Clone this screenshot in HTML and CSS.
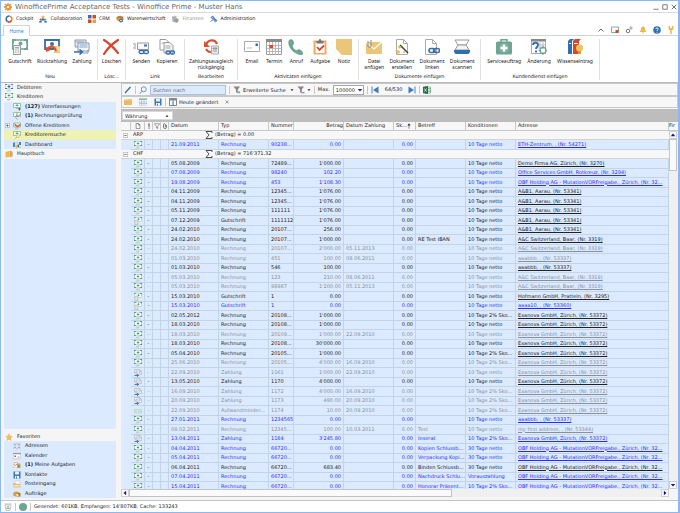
FILE: index.html
```html
<!DOCTYPE html>
<html lang="de">
<head>
    <meta charset="UTF-8">
    <meta name="viewport" content="width=device-width, initial-scale=1.0">
    <title>WinofficePrime Acceptance Tests</title>
    <link rel="stylesheet" href="styles.css">
</head>
<body>
    <!-- Icon sprite -->
    <svg class="sprite" xmlns="http://www.w3.org/2000/svg">
        <symbol id="i-gear" viewBox="0 0 16 16"><circle cx="8" cy="8" r="4.2" fill="none" stroke="#e8861c" stroke-width="3"/><path d="M8 0v3M8 13v3M0 8h3M13 8h3M2.3 2.3l2 2M11.7 11.7l2 2M2.3 13.7l2-2M11.7 4.3l2-2" stroke="#e8861c" stroke-width="2.6"/></symbol>
        <symbol id="i-cockpit" viewBox="0 0 16 16"><g fill="none" stroke-width="3"><path d="M8 2a6 6 0 0 1 5 9" stroke="#e8861c"/><path d="M13 11a6 6 0 0 1-8 2" stroke="#d9472b"/><path d="M5 13A6 6 0 0 1 8 2" stroke="#2f6fb0"/></g></symbol>
        <symbol id="i-collab" viewBox="0 0 16 16"><circle cx="8" cy="4" r="3" fill="#e9b95c"/><path d="M4 11c0-6 8-6 8 0z" fill="#2f6fb0"/><circle cx="3" cy="9" r="2" fill="#d9472b"/><path d="M0 15c0-5 6-5 6 0zM10 15c0-5 6-5 6 0z" fill="#2f6fb0"/><circle cx="13" cy="9" r="2" fill="#6fa592"/></symbol>
        <symbol id="i-crm" viewBox="0 0 16 16"><path d="M0 0h7v7H0z" fill="#3a6fa8"/><path d="M9 0h7v7H9z" fill="#d9472b"/><path d="M0 9h7v7H0z" fill="#d9472b"/><path d="M9 9h7v7H9z" fill="#e9a23b"/></symbol>
        <symbol id="i-ware" viewBox="0 0 16 16"><ellipse cx="8" cy="7" rx="7.5" ry="5.5" fill="#dba045"/><path d="M2 6c4-3 8-3 12 0" fill="none" stroke="#7a5a2a" stroke-width="1.5"/><circle cx="10" cy="11" r="4" fill="#3a6fa8"/><circle cx="10" cy="11" r="1.6" fill="#fff"/></symbol>
        <symbol id="i-fin" viewBox="0 0 16 16"><path d="M2 4l5-3 4 2v9l-5 3-4-3z" fill="#c4c4c4"/><path d="M7 8l4-2 4 2v5l-4 3-4-3z" fill="#9f9f9f"/><path d="M2 4l4 2v8M6 6l5-3" stroke="#888" fill="none"/></symbol>
        <symbol id="i-admin" viewBox="0 0 16 16"><path d="M1 5l4-4 10 10-4 4z" fill="#4b86c4"/><path d="M4 4l3 3M6 9l5 5M9 5l4 4" stroke="#fff"/><path d="M2 13l3-3" stroke="#555" stroke-width="2"/></symbol>

        <symbol id="i-gutschrift" viewBox="0 0 16 16"><path d="M.8 1h14.4v9H.8z" fill="#fff" stroke="#6fa592" stroke-width="1.6"/><path d="M0 0h4v2H2v2H0zM12 0h4v4h-2V2h-2zM14 8h2v3h-4V9h2z" fill="#6fa592"/><circle cx="8.5" cy="4.5" r="2" fill="#6fa592"/><path d="M1.5 6.500h7v9h-7z" fill="#f2f2f2" stroke="#999"/><path d="M3 8h4v1.500H3z" fill="#9aa"/><path d="M3 11h4M3 13h4" stroke="#aaa" stroke-dasharray="1 .5"/></symbol>
        <symbol id="i-rueck" viewBox="0 0 16 16"><path d="M1 1h14v9H1z" fill="#fff" stroke="#3a6fa8" stroke-width="1.800"/><circle cx="8" cy="5" r="2" fill="#3a6fa8"/><path d="M10 7h6v7h-6z" fill="#ecc678"/><path d="M10 9h6M10 11h6" stroke="#fff" stroke-width=".6"/><path d="M3 11c2-5 8-4 9 1" fill="none" stroke="#d9512f" stroke-width="2"/><path d="M1 7l1 6 5-2z" fill="#d9512f"/></symbol>
        <symbol id="i-zahlung" viewBox="0 0 16 16"><path d="M1 1h11v7H1z" fill="#e9edf1" stroke="#8a98a8"/><path d="M4 4h11v8H4z" fill="#f4f6f8" stroke="#8a98a8"/><path d="M5.500 6h8M5.500 8h8M2 3h8" stroke="#7fa2cc"/><path d="M0 13h8M5.500 10.500L8.500 13l-3 2.500" fill="none" stroke="#2f6fb0" stroke-width="1.600"/><path d="M9 14h5v-3" fill="none" stroke="#8a98a8"/></symbol>
        <symbol id="i-loeschen" viewBox="0 0 16 16"><path d="M1 1c5 3 10 8 14 13M15 1C9 5 4 10 1 15" fill="none" stroke="#d8452a" stroke-width="2.200" stroke-linecap="round"/></symbol>
        <symbol id="i-senden" viewBox="0 0 16 16"><path d="M4.500 4h11v6.500h-11z" fill="#fafafa" stroke="#999"/><path d="M11 5.500h3v2h-3z" fill="#3a6fa8"/><path d="M0 5h3M1 7h2M0 9h3" stroke="#999"/><g fill="none" stroke="#3a6fa8" stroke-width="1.300"><rect x="6" y="11.500" width="5" height="3" rx="1.500"/><rect x="10.500" y="11.500" width="5" height="3" rx="1.500"/></g></symbol>
        <symbol id="i-kopieren" viewBox="0 0 16 16"><path d="M1 .5h6l3 3V11H1z" fill="#fff" stroke="#999"/><path d="M5 3.500h6l3 3V14H5z" fill="#f4f4f4" stroke="#999"/><path d="M2.500 4h3M6.500 7h5M6.500 9h5" stroke="#aaa"/><g fill="none" stroke="#3a6fa8" stroke-width="1.300"><rect x="7" y="12" width="4.500" height="3" rx="1.500"/><rect x="11" y="12" width="4.500" height="3" rx="1.500"/></g></symbol>
        <symbol id="i-undo" viewBox="0 0 16 16"><path d="M3 6c2-6 9-6 11-1" fill="none" stroke="#d9512f" stroke-width="2.200"/><path d="M1 2v6h6z" fill="#d9512f"/><path d="M12 9c-2 5-7 5-9 1" fill="none" stroke="#d9512f" stroke-width="2"/><path d="M8.500 7h7v8h-7z" fill="#ececec" stroke="#aaa"/><path d="M10 9h4v1h-4zM10 12h4" stroke="#999" fill="#999"/></symbol>
        <symbol id="i-email" viewBox="0 0 16 16"><path d="M.5 2.500h15v10H.5z" fill="#fff" stroke="#aaa"/><path d="M11.500 4.500h2.500V7h-2.500z" fill="#2f6fb0"/><path d="M3 9h5" stroke="#bbb"/></symbol>
        <symbol id="i-termin" viewBox="0 0 16 16"><path d="M.5.5h15v15H.5z" fill="#fff" stroke="#999"/><path d="M0 0h16v3H0z" fill="#8a8a8a"/><path d="M3.500 3v13M6.500 3v13M9.500 3v13M12.500 3v13M0 6.500h16M0 9.500h16M0 12.500h16" stroke="#aaa" stroke-width=".8"/><path d="M3.500 6h3.500v3H3.500z" fill="#d9472b"/></symbol>
        <symbol id="i-anruf" viewBox="0 0 16 16"><path d="M1 1c3-2 5 1 5 3S4 6 5 8s3 4 4 3 3-1 5 1 1 4-1 4C6 16-2 7 1 1z" fill="#6fa592"/></symbol>
        <symbol id="i-aufgabe" viewBox="0 0 16 16"><path d="M1.500 1.500h13v14h-13z" fill="#f0a860"/><path d="M3.500 3.500h9v10.500h-9z" fill="#fff"/><path d="M4.500 2h2l1-2h1l1 2h2v2.500h-7z" fill="#777"/><path d="M5 8l2.500 3L12 6.500" fill="none" stroke="#d9472b" stroke-width="1.800"/></symbol>
        <symbol id="i-notiz" viewBox="0 0 16 16"><path d="M0 0h16v16H6L0 10z" fill="#ecc678"/></symbol>
        <symbol id="i-datei" viewBox="0 0 16 16"><path d="M0 3h16v12H0z" fill="#ecc678"/><path d="M0 3l8 7 8-7" fill="none" stroke="#fff" stroke-width="1.200"/><path d="M2 2v5c0 2 3 2 3 0V1" fill="none" stroke="#888"/></symbol>
        <symbol id="i-erstellen" viewBox="0 0 16 16"><path d="M2.500.5h7l4 4v11h-11z" fill="#fff" stroke="#aaa"/><path d="M9.500.5v4h4" fill="none" stroke="#aaa"/><path d="M6 6l8 8" stroke="#444" stroke-width="1.600"/><path d="M4 8h3M5.500 6.500v3M2 13h4M4 11v4M9 13h2" stroke="#ecb84e" stroke-width="1.400"/></symbol>
        <symbol id="i-linken" viewBox="0 0 16 16"><path d="M1.500.5h7l4 4v11h-11z" fill="#fff" stroke="#aaa"/><path d="M8.500.5v4h4" fill="none" stroke="#aaa"/><g fill="none" stroke="#3a6fa8" stroke-width="1.600"><rect x="5" y="9.500" width="6" height="4" rx="2"/><rect x="9.500" y="9.500" width="6" height="4" rx="2"/></g></symbol>
        <symbol id="i-scannen" viewBox="0 0 16 16"><path d="M1 1h14l-3 5H4z" fill="#fff" stroke="#999"/><path d="M4 6h8l3 5H1z" fill="#f4f4f4" stroke="#999"/><path d="M0 11h16v2l-1.500 2h-13L0 13z" fill="#2f6fb0"/></symbol>
        <symbol id="i-service" viewBox="0 0 16 16"><path d="M5 3V.8h6V3" fill="none" stroke="#6fa592" stroke-width="1.500"/><rect y="2.500" width="16" height="13" rx="1.500" fill="#6fa592"/><circle cx="8" cy="9" r="4.500" fill="#86b5a4"/><path d="M8 5.500v7M4.500 9h7" stroke="#fff" stroke-width="2.400"/></symbol>
        <symbol id="i-aenderung" viewBox="0 0 16 16"><path d="M.5 1.500h14v13H.5z" fill="#fff" stroke="#aaa"/><path d="M0 0h15v2.500H0z" fill="#888"/><path d="M9 3v6M12 3v6M7 6h8M7 9h8" stroke="#bbb"/><path d="M2 6c0-3 5-3 5 0 0 2-2 2-2 4M5 11.500v2" fill="none" stroke="#2f6fb0" stroke-width="1.900"/><circle cx="12" cy="11.500" r="3" fill="#fff" stroke="#6fa592" stroke-width="1.300"/><path d="M12 7v2.500M12 13.500V16M7.500 11.500H10M14 11.500h2" stroke="#6fa592"/></symbol>
        <symbol id="i-wissen" viewBox="0 0 16 16"><path d="M1 2l2-2h4L5 2v13H1z" fill="#2f6fb0"/><path d="M6 2l2-2h6l-2 2v13H6z" fill="#d9472b"/><path d="M2 4.500h2M7 4.500h4" stroke="#fff"/><circle cx="12.500" cy="9" r="3.500" fill="#f0c25e"/><path d="M11 12h3v3h-3z" fill="#d89a2e"/></symbol>

        <symbol id="i-up" viewBox="0 0 16 16"><path d="M3 11l5-5 5 5" fill="none" stroke="#666" stroke-width="2"/></symbol>
        <symbol id="i-window" viewBox="0 0 16 16"><path d="M1 2h14v11H1z" fill="#fff" stroke="#6fa592" stroke-width="1.800"/><path d="M9 8h6v6H9z" fill="#d9472b"/></symbol>
        <symbol id="i-gears" viewBox="0 0 16 16"><circle cx="6" cy="10" r="3.500" fill="none" stroke="#777" stroke-width="2"/><circle cx="12" cy="4" r="2.300" fill="none" stroke="#6fa592" stroke-width="1.800"/></symbol>
        <symbol id="i-bell" viewBox="0 0 16 16"><path d="M8 1c4 0 4 4 4 7l3 4H1l3-4c0-3 0-7 4-7z" fill="#ecb84e"/><circle cx="8" cy="14" r="1.600" fill="#ecb84e"/></symbol>
        <symbol id="i-help" viewBox="0 0 16 16"><circle cx="8" cy="8" r="7.500" fill="#2f6fb0"/><path d="M5.500 6c0-3 5-3 5 0 0 2-2.500 1.500-2.500 4M8 11.500v1.800" fill="none" stroke="#fff" stroke-width="1.800"/></symbol>
        <symbol id="i-key" viewBox="0 0 16 16"><path d="M3 0v5c0 2 2 3 3.500 3v8h3V8C11 8 13 7 13 5V0h-3v4H6V0z" fill="#ecb84e"/></symbol>

        <symbol id="i-min" viewBox="0 0 16 16"><path d="M1 14h14" stroke="#777" stroke-width="2.500"/></symbol>
        <symbol id="i-max" viewBox="0 0 16 16"><path d="M2 2h12v12H2z" fill="none" stroke="#777" stroke-width="2.500"/></symbol>
        <symbol id="i-close" viewBox="0 0 16 16"><path d="M2 2l12 12M14 2L2 14" stroke="#666" stroke-width="2.500"/></symbol>

        <symbol id="i-rechnung" viewBox="0 0 16 16"><path d="M1 1h14v8H1z" fill="#fff" stroke="#9cc7b2"/><path d="M0 0h4v1.500H1.500V3H0zM12 0h4v3h-1.500V1.500H12zM0 7h1.500v1.500H4V10H0zM14.500 7H16v3h-4V8.500h2.500z" fill="#3f9a70"/><path d="M8 2.500v5M5.500 5h5" stroke="#3f9a70" stroke-width="1.800"/><path d="M5 11h7l-2 4H3z" fill="#c9ccd1"/></symbol>
        <symbol id="i-gut" viewBox="0 0 16 16"><path d="M1 1h14v8H1z" fill="#fff" stroke="#9cc7b2"/><path d="M0 0h4v1.500H0zM12 0h4v3h-1.500V1.500H12z" fill="#3f9a70"/><circle cx="9" cy="4.500" r="1.800" fill="#3f9a70"/><path d="M1.500 6h6v9h-6z" fill="#e2e2e2" stroke="#aaa"/></symbol>
        <symbol id="i-zahl" viewBox="0 0 16 16"><path d="M1 1h11v7H1zM4 4h11v7H4z" fill="#eef0f3" stroke="#9aa5b5"/><path d="M1 13h8M6 10.500L9 13l-3 2.500" fill="none" stroke="#2f6fb0" stroke-width="1.800"/></symbol>
        <symbol id="i-aufwand" viewBox="0 0 16 16"><path d="M1 5h14v7H1z" fill="#dcefe2" stroke="#9cc7a8"/><path d="M4 7v3M8 8.500h2M12 7v3" stroke="#6aa880"/></symbol>

        <symbol id="i-debitor" viewBox="0 0 16 16"><path d="M1 1h14v8H1z" fill="#fff" stroke="#9ab4d6"/><path d="M0 0h4v1.500H0zM12 0h4v1.500h-4zM0 8h4v2H0zM12 8h4v2h-4z" fill="#3a6fa8"/><path d="M8 2v6M5 5h6" stroke="#3a6fa8" stroke-width="2.200"/><path d="M5 11h7l-2 4H3z" fill="#c9ccd1"/></symbol>
        <symbol id="i-vorerf" viewBox="0 0 16 16"><path d="M1 1h14v8H1z" fill="#fff" stroke="#6fb592" stroke-width="1.500"/><path d="M8 2v5M5 5h6" stroke="#3f9a70" stroke-width="1.600"/><path d="M6 9h6v3H6z" fill="#bbb"/><path d="M13 9v6M10 12h6" stroke="#555" stroke-width="1.600"/></symbol>
        <symbol id="i-pruef" viewBox="0 0 16 16"><path d="M1 1h14v8H1z" fill="#fff" stroke="#6fb592" stroke-width="1.500"/><path d="M8 2v5" stroke="#3f9a70" stroke-width="1.600"/><path d="M3 9l7 6" stroke="#aaa" stroke-width="2"/><path d="M6 6l4 3 5-5" fill="none" stroke="#d9512f" stroke-width="1.800"/></symbol>
        <symbol id="i-offen" viewBox="0 0 16 16"><path d="M1 2h14v8H1z" fill="#fff" stroke="#6fb592" stroke-width="1.500"/><path d="M3 2l6 5 6-4v4l-6 5-6-5z" fill="#d96a4a"/><path d="M5 11h7l-2 4H3z" fill="#c9ccd1"/></symbol>
        <symbol id="i-suche" viewBox="0 0 16 16"><path d="M1 1h14v8H1z" fill="#fff" stroke="#6fb592" stroke-width="1.500"/><path d="M8 2v5M5 5h6" stroke="#3f9a70" stroke-width="1.600"/><circle cx="10" cy="10" r="3" fill="#f6efd0" stroke="#e0b040" stroke-width="1.300"/><path d="M8 12l-4 4" stroke="#e0b040" stroke-width="1.600"/></symbol>
        <symbol id="i-dash" viewBox="0 0 16 16"><path d="M0 3h4v9H0zM12 2h4v6h-4z" fill="#4b86c4"/><path d="M5 1h6v5H5z" fill="#c8d8ea"/><path d="M5 8h3v7H5z" fill="#ecb84e"/><path d="M9 7h3v6H9z" fill="#3a6fa8"/><path d="M12 10h4v4h-4z" fill="#f0d090"/></symbol>
        <symbol id="i-haupt" viewBox="0 0 16 16"><path d="M1 4l7-2v12l-7 1z" fill="#ecb84e"/><path d="M9 2l4-1v12l-4 2z" fill="#dba045"/><path d="M13 3l2 1v9l-2 1z" fill="#999"/></symbol>
        <symbol id="i-star" viewBox="0 0 16 16"><path d="M8 0l2.400 5.300 5.600.6-4.200 3.800L13 16l-5-3-5 3 1.200-6.300L0 5.900l5.600-.6z" fill="#ecbe62"/></symbol>
        <symbol id="i-adr" viewBox="0 0 16 16"><path d="M.5 2.500h15v11H.5z" fill="#fff" stroke="#9ab4d6"/><path d="M8 2v12" stroke="#888"/><path d="M2 5h4M10 5h4M2 8h4M10 8h4M2 11h4M10 11h4" stroke="#6f93b8" stroke-width="1.400"/></symbol>
        <symbol id="i-kal" viewBox="0 0 16 16"><path d="M.5 2.500h15v11H.5z" fill="#fff" stroke="#aaa"/><path d="M0 2h16v2.500H0z" fill="#999"/><path d="M3 7h3v3H3z" fill="#d9472b"/><path d="M9 10h4" stroke="#888" stroke-width="1.500"/></symbol>
        <symbol id="i-aufg" viewBox="0 0 16 16"><path d="M1 2h8v12H1z" fill="#f0c080"/><path d="M3 4h6v9H3z" fill="#fff"/><path d="M8 5h7v9H8z" fill="#e9a050"/><path d="M10 8h3v5h-3z" fill="#4b9a80"/><path d="M3 7l2 2 4-4" fill="none" stroke="#d9472b" stroke-width="1.400"/></symbol>
        <symbol id="i-disk" viewBox="0 0 16 16"><path d="M1 1h14v14H1z" fill="#3a78b8"/><path d="M4 1h8v6H4z" fill="#e8f0fa"/><path d="M4 10h8v5H4z" fill="#fff"/><path d="M6 11h2v4H6z" fill="#3a78b8"/></symbol>
        <symbol id="i-post" viewBox="0 0 16 16"><path d="M4 2h10v6H4z" fill="#fff" stroke="#bbb"/><path d="M0 6h6l1 2h8v7H1z" fill="#ecc060"/><path d="M2 10h11v3H2z" fill="#f8e6bc"/></symbol>
        <symbol id="i-auft" viewBox="0 0 16 16"><ellipse cx="7" cy="8" rx="7" ry="5" fill="#dba045"/><path d="M8 6h7v7H9z" fill="#b5762a"/><circle cx="9" cy="10" r="2.200" fill="#fff"/></symbol>

        <symbol id="i-pen" viewBox="0 0 16 16"><path d="M2 14L13 2" stroke="#2f6fb0" stroke-width="2.600"/></symbol>
        <symbol id="i-lupe" viewBox="0 0 16 16"><circle cx="9.500" cy="6.500" r="5" fill="#eef5fd" stroke="#4b86c4" stroke-width="1.700"/><path d="M6 10.500l-4.500 5" stroke="#4b86c4" stroke-width="2"/></symbol>
        <symbol id="i-funnel" viewBox="0 0 16 16"><path d="M1 1h13L9.500 7v8L6 12V7z" fill="#858585"/><path d="M12 10v5M9.500 12.500h5" stroke="#4b9a70" stroke-width="1.500"/></symbol>
        <symbol id="i-funnel2" viewBox="0 0 16 16"><path d="M1 1h13L9.500 7v8L6 12V7z" fill="#858585"/><path d="M10 13.500h5" stroke="#a050b0" stroke-width="2"/></symbol>
        <symbol id="i-first" viewBox="0 0 16 16"><path d="M2 1v14" stroke="#4b86c4" stroke-width="2"/><path d="M15 1v14L4 8z" fill="#3f7cbc"/></symbol>
        <symbol id="i-last" viewBox="0 0 16 16"><path d="M14 1v14" stroke="#4b86c4" stroke-width="2"/><path d="M1 1v14l11-7z" fill="#3f7cbc"/></symbol>
        <symbol id="i-excel" viewBox="0 0 16 16"><path d="M8 2h7v12H8z" fill="#fff" stroke="#2f7f4f"/><path d="M0 1.500L10 0v16L0 14.500z" fill="#1f7244"/><path d="M3 5l4 6M7 5l-4 6" stroke="#fff" stroke-width="1.500"/><path d="M10 5h5M10 8h5M10 11h5" stroke="#2f7f4f"/></symbol>
        <symbol id="i-folder" viewBox="0 0 16 16"><path d="M0 3h6l2-1h8v12H0z" fill="#ecc678"/><path d="M0 6h16v8H0z" fill="#e9bb60"/></symbol>
        <symbol id="i-table" viewBox="0 0 16 16"><path d="M.5 1.500h15v13H.5z" fill="#fff" stroke="#9ab4d6"/><path d="M0 1h16v3H0z" fill="#8fb8a8"/><path d="M5 4v10M10 4v10M0 8h16M0 11h16" stroke="#7f9fc8"/></symbol>
        <symbol id="i-column" viewBox="0 0 16 16"><path d="M1 1h14v14H1z" fill="#fff" stroke="#666" stroke-width="1.600"/><path d="M1 1h14v4H1z" fill="#888"/><path d="M8 5v10" stroke="#4b86c4" stroke-width="2.500"/></symbol>
        <symbol id="i-page" viewBox="0 0 16 16"><path d="M3 1h6l4 4v10H3z" fill="#fff" stroke="#444" stroke-width="1.500"/><path d="M9 1v4h4" fill="none" stroke="#444" stroke-width="1.500"/></symbol>
        <symbol id="i-excl" viewBox="0 0 16 16"><path d="M8 1v9M8 12v3" stroke="#333" stroke-width="2.500"/></symbol>
        <symbol id="i-filter" viewBox="0 0 16 16"><path d="M1 2h14L9.500 9v6l-3-2V9z" fill="#fff" stroke="#555" stroke-width="1.500"/></symbol>
        <symbol id="i-clip" viewBox="0 0 16 16"><path d="M12 5v6c0 5-8 5-8 0V4c0-3 5-3 5 0v7" fill="none" stroke="#555" stroke-width="2"/></symbol>
        <symbol id="i-minus" viewBox="0 0 16 16"><path d="M1 1h14v14H1z" fill="#fff" stroke="#999" stroke-width="2"/><path d="M4 8h8" stroke="#444" stroke-width="2"/></symbol>
        <symbol id="i-plus" viewBox="0 0 16 16"><path d="M1 1h14v14H1z" fill="#fff" stroke="#999" stroke-width="2"/><path d="M4 8h8M8 4v8" stroke="#444" stroke-width="2"/></symbol>
        <symbol id="i-sum" viewBox="0 0 16 16"><path d="M14 4V1H2l6 7-6 7h12v-3" fill="none" stroke="#333" stroke-width="1.700"/></symbol>
        <symbol id="i-sort" viewBox="0 0 16 16"><path d="M8 3v4M5 6l3-4 3 4zM8 10v5M6 11l2-2" fill="#333" stroke="#333" stroke-width="1.600"/></symbol>
        <symbol id="i-tri-up" viewBox="0 0 16 16"><path d="M8 4l6 7H2z" fill="currentColor"/></symbol>
        <symbol id="i-tri-down" viewBox="0 0 16 16"><path d="M8 12l6-7H2z" fill="currentColor"/></symbol>
        <symbol id="i-tri-left" viewBox="0 0 16 16"><path d="M4 8l7-6v12z" fill="currentColor"/></symbol>
        <symbol id="i-tri-right" viewBox="0 0 16 16"><path d="M12 8L5 2v12z" fill="currentColor"/></symbol>
        <symbol id="i-recycle" viewBox="0 0 16 16"><path d="M2 4h12l-2 11H4z" fill="#fff" stroke="#aaa" stroke-width="1.300"/><path d="M1 2h14" stroke="#aaa" stroke-width="1.500"/><path d="M5 11l3-5 3 5z" fill="none" stroke="#6fa592" stroke-width="1.500"/></symbol>
    </svg>

    <!-- Title bar -->
    <header class="titlebar">
        <svg class="ico s8"><use href="#i-gear"/></svg>
        <h1>WinofficePrime Acceptance Tests - Winoffice Prime - Muster Hans</h1>
        <div class="window-buttons">
            <button aria-label="Minimieren"><svg class="ico s6"><use href="#i-min"/></svg></button>
            <button aria-label="Maximieren"><svg class="ico s6"><use href="#i-max"/></svg></button>
            <button aria-label="Schliessen"><svg class="ico s6"><use href="#i-close"/></svg></button>
        </div>
    </header>

    <!-- Module menu -->
    <nav class="menu">
        <a href="#"><svg class="ico s8"><use href="#i-cockpit"/></svg>Cockpit</a>
        <a href="#"><svg class="ico s8"><use href="#i-collab"/></svg>Collaboration</a>
        <a href="#"><svg class="ico s8"><use href="#i-crm"/></svg>CRM</a>
        <a href="#"><svg class="ico s8"><use href="#i-ware"/></svg>Warenwirtschaft</a>
        <a href="#" class="off"><svg class="ico s8"><use href="#i-fin"/></svg>Finanzen</a>
        <a href="#"><svg class="ico s8"><use href="#i-admin"/></svg>Administration</a>
    </nav>

    <div class="tabs">
        <button class="tab">Home</button>
        <div class="quick">
            <button aria-label="Einklappen"><svg class="ico s8"><use href="#i-up"/></svg></button>
            <button aria-label="Fenster"><svg class="ico s8"><use href="#i-window"/></svg></button>
            <button aria-label="Einstellungen"><svg class="ico s8"><use href="#i-gears"/></svg></button>
            <button aria-label="Meldungen"><svg class="ico s8"><use href="#i-bell"/></svg></button>
            <button aria-label="Hilfe"><svg class="ico s8"><use href="#i-help"/></svg></button>
            <button aria-label="Lizenz"><svg class="ico s8"><use href="#i-key"/></svg></button>
        </div>
    </div>

    <!-- Ribbon -->
    <div class="ribbon">
        <section class="group g-neu">
            <div class="tools">
                <button><svg class="ico s16"><use href="#i-gutschrift"/></svg>Gutschrift</button>
                <button><svg class="ico s16"><use href="#i-rueck"/></svg>Rückzahlung</button>
                <button><svg class="ico s16"><use href="#i-zahlung"/></svg>Zahlung</button>
            </div>
            <h2>Neu</h2>
        </section>
        <section class="group g-del">
            <div class="tools">
                <button><svg class="ico s16"><use href="#i-loeschen"/></svg>Löschen</button>
            </div>
            <h2>Lösc...</h2>
        </section>
        <section class="group g-link">
            <div class="tools">
                <button><svg class="ico s16"><use href="#i-senden"/></svg>Senden</button>
                <button><svg class="ico s16"><use href="#i-kopieren"/></svg>Kopieren</button>
            </div>
            <h2>Link</h2>
        </section>
        <section class="group g-edit">
            <div class="tools">
                <button><svg class="ico s16"><use href="#i-undo"/></svg>Zahlungsausgleich<br>rückgängig</button>
            </div>
            <h2>Bearbeiten</h2>
        </section>
        <section class="group g-akt">
            <div class="tools">
                <button><svg class="ico s16"><use href="#i-email"/></svg>Email</button>
                <button><svg class="ico s16"><use href="#i-termin"/></svg>Termin</button>
                <button><svg class="ico s16"><use href="#i-anruf"/></svg>Anruf</button>
                <button><svg class="ico s16"><use href="#i-aufgabe"/></svg>Aufgabe</button>
                <button><svg class="ico s16"><use href="#i-notiz"/></svg>Notiz</button>
            </div>
            <h2>Aktivitäten einfügen</h2>
        </section>
        <section class="group g-dok">
            <div class="tools">
                <button><svg class="ico s16"><use href="#i-datei"/></svg>Datei<br>anfügen</button>
                <button><svg class="ico s16"><use href="#i-erstellen"/></svg>Dokument<br>erstellen</button>
                <button><svg class="ico s16"><use href="#i-linken"/></svg>Dokument<br>linken</button>
                <button><svg class="ico s16"><use href="#i-scannen"/></svg>Dokument<br>scannen</button>
            </div>
            <h2>Dokumente einfügen</h2>
        </section>
        <section class="group g-kd">
            <div class="tools">
                <button><svg class="ico s16"><use href="#i-service"/></svg>Serviceauftrag</button>
                <button><svg class="ico s16"><use href="#i-aenderung"/></svg>Änderung</button>
                <button><svg class="ico s16"><use href="#i-wissen"/></svg>Wissenseintrag</button>
            </div>
            <h2>Kundendienst einfügen</h2>
        </section>
    </div>

    <div class="workspace">
        <!-- Navigation -->
        <aside class="sidebar">
            <nav class="tree tree-main">
                <a href="#" class="root"><svg class="ico s8"><use href="#i-debitor"/></svg>Debitoren</a>
                <a href="#" class="root"><svg class="ico s8"><use href="#i-rechnung"/></svg>Kreditoren</a>
                <a href="#"><svg class="ico s8"><use href="#i-vorerf"/></svg><span><b>(127)</b> Vorerfassungen</span></a>
                <a href="#"><svg class="ico s8"><use href="#i-pruef"/></svg><span><b>(1)</b> Rechnungsprüfung</span></a>
                <a href="#" class="node"><svg class="ico s5"><use href="#i-plus"/></svg><svg class="ico s8"><use href="#i-offen"/></svg>Offene Kreditoren</a>
                <a href="#" class="active"><svg class="ico s8"><use href="#i-suche"/></svg>Kreditorensuche</a>
                <a href="#"><svg class="ico s8"><use href="#i-dash"/></svg>Dashboard</a>
                <a href="#" class="root"><svg class="ico s8"><use href="#i-haupt"/></svg>Hauptbuch</a>
            </nav>
            <nav class="tree">
                <a href="#" class="root"><svg class="ico s8"><use href="#i-star"/></svg>Favoriten</a>
                <a href="#"><svg class="ico s8"><use href="#i-adr"/></svg>Adressen</a>
                <a href="#"><svg class="ico s8"><use href="#i-kal"/></svg>Kalender</a>
                <a href="#"><svg class="ico s8"><use href="#i-aufg"/></svg><span><b>(1)</b> Meine Aufgaben</span></a>
                <a href="#"><svg class="ico s8"><use href="#i-disk"/></svg>Kontakte</a>
                <a href="#"><svg class="ico s8"><use href="#i-post"/></svg>Posteingang</a>
                <a href="#"><svg class="ico s8"><use href="#i-auft"/></svg>Aufträge</a>
            </nav>
        </aside>

        <main class="content">
            <div class="toolbar">
                <button aria-label="Bearbeiten"><svg class="ico s8"><use href="#i-pen"/></svg></button>
                <i class="sep"></i>
                <button aria-label="Suchen"><svg class="ico s8"><use href="#i-lupe"/></svg></button>
                <input type="text" class="search" placeholder="Suchen nach" aria-label="Suchen nach">
                <i class="sep"></i>
                <button><svg class="ico s8"><use href="#i-funnel"/></svg>Erweiterte Suche<svg class="ico s4 arrow"><use href="#i-tri-down"/></svg></button>
                <button aria-label="Filter"><svg class="ico s8"><use href="#i-funnel2"/></svg><svg class="ico s4"><use href="#i-tri-down"/></svg></button>
                <i class="sep"></i>
                <label for="max">Max.</label>
                <span class="combo">
                    <select id="max"><option>100000</option></select>
                    <svg class="ico s6"><use href="#i-tri-down"/></svg>
                </span>
                <i class="sep"></i>
                <button aria-label="Erster"><svg class="ico s8"><use href="#i-first"/></svg></button>
                <span class="pos">64/530</span>
                <button aria-label="Letzter"><svg class="ico s8"><use href="#i-last"/></svg></button>
                <i class="sep"></i>
                <button aria-label="Excel"><svg class="ico s8"><use href="#i-excel"/></svg></button>
            </div>
            <div class="toolbar views">
                <button aria-label="Öffnen"><svg class="ico s8"><use href="#i-folder"/></svg></button>
                <button aria-label="Tabelle"><svg class="ico s8"><use href="#i-table"/></svg></button>
                <button aria-label="Speichern"><svg class="ico s8"><use href="#i-disk"/></svg></button>
                <span class="tab-view">
                    <i class="sep"></i>
                    <button><svg class="ico s8"><use href="#i-column"/></svg>Heute geändert</button>
                </span>
                <button aria-label="Ansicht schliessen"><svg class="ico s4"><use href="#i-close"/></svg></button>
            </div>
            <div class="groupby">
                <button>Währung<svg class="ico s4"><use href="#i-tri-up"/></svg></button>
            </div>

            <div class="grid">
                <table>
                    <colgroup>
                        <col class="c-ind"><col class="c-ico"><col class="c-s"><col class="c-s"><col class="c-s">
                        <col class="c-m"><col class="c-m"><col class="c-nr"><col class="c-m"><col class="c-m">
                        <col class="c-sk"><col class="c-m"><col class="c-m"><col><col class="c-fin">
                    </colgroup>
                    <thead>
                        <tr>
                            <th></th>
                            <th><svg class="ico s6"><use href="#i-page"/></svg></th>
                            <th><svg class="ico s6"><use href="#i-excl"/></svg></th>
                            <th><svg class="ico s6"><use href="#i-filter"/></svg></th>
                            <th><svg class="ico s6"><use href="#i-clip"/></svg></th>
                            <th>Datum</th><th>Typ</th><th>Nummer</th><th class="num">Betrag</th><th>Datum Zahlung</th>
                            <th><span class="sorted">Sk...<svg class="ico s6"><use href="#i-sort"/></svg></span></th>
                            <th>Betreff</th><th>Konditionen</th><th>Adresse</th><th class="last">Fir</th>
                        </tr>
                    </thead>
                    <tbody id="rows"></tbody>
                </table>
                <div class="vscroll">
                    <button aria-label="Nach oben"><svg class="ico s6"><use href="#i-tri-up"/></svg></button>
                    <div class="thumb"></div>
                    <button class="end" aria-label="Nach unten"><svg class="ico s6"><use href="#i-tri-down"/></svg></button>
                </div>
            </div>
            <div class="hscroll">
                <button aria-label="Nach links"><svg class="ico s6"><use href="#i-tri-left"/></svg></button>
                <div class="thumb"></div>
                <button class="end" aria-label="Nach rechts"><svg class="ico s6"><use href="#i-tri-right"/></svg></button>
            </div>
        </main>
    </div>

    <!-- Status bar -->
    <footer class="status">
        <svg class="ico s8"><use href="#i-recycle"/></svg>
        <i class="sep"></i>
        <span class="online"></span>
        <i class="sep"></i>
        <span>Gesendet: 601KB, Empfangen: 14'807KB, Cache: 133243</span>
    </footer>

    <script src="script.js"></script>
</body>
</html>
```
FILE: styles.css
```css
* {
    box-sizing: border-box;
}
body {
    margin: 0;
    height: 100vh;
    display: flex;
    flex-direction: column;
    overflow: hidden;
    border: 1px solid #8cb8f2;
    border-width: 1px 2px 1px 1px;
    background: #fff;
    color: #222;
    font-family: "Noto Sans", "Open Sans", sans-serif;
    font-size: 5px;
    line-height: 6px;
    text-rendering: geometricPrecision;
}
a {
    color: inherit;
    text-decoration: none;
}
button, input, select {
    font: inherit;
    color: inherit;
    margin: 0;
    padding: 0;
    border: 0;
    background: none;
}
h1, h2 {
    margin: 0;
    font-weight: normal;
}
.titlebar, .workspace, .status {
    font-family: "DejaVu Sans", Verdana, sans-serif;
}
.sprite {
    display: none;
}
.ico {
    display: block;
    flex: none;
}
.s4 { width: 4px; height: 4px; }
.s5 { width: 5px; height: 5px; }
.s6 { width: 6px; height: 6px; }
.s8 { width: 8px; height: 8px; }
.s16 { width: 16px; height: 16px; }
.sep {
    flex: none;
    width: 1px;
    height: 8px;
    background: #c8c8c8;
}

/* Title bar and menu */
.titlebar {
    flex: none;
    display: flex;
    align-items: center;
    height: 12px;
    padding: 0 1px 0 3px;
    border-bottom: 1px solid #dcdcdc;
}
.titlebar h1 {
    flex: 1;
    padding-left: 3px;
    font-size: 7px;
    line-height: 10px;
    color: #666;
}
.window-buttons {
    display: flex;
    gap: 3px;
}
.menu {
    flex: none;
    display: flex;
    align-items: center;
    gap: 6px;
    height: 12px;
    padding-left: 4px;
}
.menu a {
    display: flex;
    align-items: center;
    gap: 3px;
}
.menu .off {
    color: #999;
}

/* Tabs */
.tabs {
    flex: none;
    display: flex;
    justify-content: space-between;
    align-items: flex-end;
    height: 11px;
    padding: 0 3px 0 2px;
    border-bottom: 1px solid #d4d4d4;
}
.tab {
    width: 27px;
    height: 11px;
    margin-bottom: -1px;
    border: 1px solid #d4d4d4;
    border-bottom: 0;
    background: #fff;
    color: #2a8ad4;
}
.quick {
    display: flex;
    gap: 6px;
    padding-bottom: 1px;
}

/* Ribbon */
.ribbon {
    flex: none;
    display: flex;
    height: 47px;
    padding: 3px 0 2px 2px;
    border-bottom: 1px solid #b8b8b8;
}
.group {
    display: flex;
    flex-direction: column;
    justify-content: space-between;
    border-right: 1px solid #e2e2e2;
    text-align: center;
}
.tools {
    display: flex;
    justify-content: space-evenly;
    align-items: flex-start;
}
.tools button {
    white-space: nowrap;
}
.tools .ico {
    margin: 0 auto 3px;
}
.g-neu { width: 95px; }
.g-del { width: 28px; }
.g-link { width: 59px; }
.g-edit { width: 53px; }
.g-akt { width: 121px; }
.g-dok { width: 122px; }
.g-kd { width: 119px; }
.group h2 {
    font-size: 5px;
}

/* Sidebar */
.workspace {
    flex: 1;
    min-height: 0;
    display: flex;
    gap: 5px;
    padding: 0 0 2px 3px;
    background: #f5f5f5;
    border-bottom: 1px solid #c4c4c4;
}
.sidebar {
    flex: none;
    width: 112px;
    display: flex;
    flex-direction: column;
    gap: 3px;
}
.tree {
    background: #dceaff;
}
.tree-main {
    flex: 1;
}
.tree a {
    display: flex;
    align-items: center;
    gap: 4px;
    height: 9px;
    padding-left: 9px;
}
.tree a:nth-child(even) {
    height: 10px;
}
.tree .root {
    padding-left: 1px;
    background: #f5f5f5;
}
.tree .node {
    padding-left: 1px;
}
.tree .node .s5 {
    margin-right: -1px;
}
.tree .active {
    background: #eef2b4;
}

/* Toolbars */
.content {
    flex: 1;
    min-width: 0;
    display: flex;
    flex-direction: column;
    padding-bottom: 1px;
}
.toolbar {
    flex: none;
    display: flex;
    align-items: center;
    gap: 3px;
    height: 13px;
    padding-left: 2px;
    border: 1px solid #c8c8c8;
    background: #f7f7f7;
}
.views {
    gap: 7px;
    height: 12px;
}
.toolbar button {
    display: flex;
    align-items: center;
    gap: 2px;
}
.toolbar .arrow {
    margin-left: 2px;
}
.pos {
    padding: 0 3px;
}
.tab-view {
    display: flex;
    gap: 3px;
    margin-left: -4px;
}
.search {
    width: 76px;
    height: 10px;
    padding: 0 2px;
    border: 1px solid #a8c4e8;
    background: #dceaff;
}
.search::placeholder {
    color: #667;
    font-style: italic;
}
.combo {
    display: flex;
    align-items: center;
    height: 10px;
    border: 1px solid #a8a8a8;
    background: #fff;
    color: #24248c;
}
.combo select {
    appearance: none;
    width: 23px;
    padding-left: 2px;
    color: #222;
}
.groupby {
    flex: none;
    display: flex;
    align-items: center;
    height: 13px;
    margin-top: 1px;
    padding-left: 1px;
    background: #bdbdbd;
}
.groupby button {
    display: flex;
    justify-content: space-between;
    align-items: center;
    width: 51px;
    height: 9px;
    padding: 0 3px 0 2px;
    border: 1px solid #d8d8d8;
    background: #fff;
}

/* Data grid */
.grid {
    flex: 1;
    min-height: 0;
    position: relative;
    overflow: hidden;
    background: #dceaff;
}
table {
    width: 100%;
    table-layout: fixed;
    border-collapse: separate;
    border-spacing: 0;
}
.c-ind { width: 10px; }
.c-ico { width: 14px; }
.c-s { width: 8px; }
.c-m { width: 50px; }
.c-nr { width: 25px; }
.c-sk { width: 22px; }
.c-fin { width: 9px; }
th, td {
    height: 9px;
    padding: 0 2px;
    border: 0 solid #c3d3e8;
    border-width: 0 1px 1px 0;
    text-align: left;
    font-weight: normal;
    white-space: nowrap;
    overflow: hidden;
}
tbody tr:nth-child(even) td {
    height: 10px;
}
th {
    background: #f7f7f7;
    border-color: #c8c8c8;
}
th .ico, td .ico {
    margin: 0 auto;
}
th .ico {
    margin-left: -1px;
}
th:nth-child(2) .ico {
    margin-left: 2px;
}
th.num, th.last {
    padding: 0;
}
th.last {
    border-right: 0;
}
.num {
    text-align: right;
}
.sorted, .total {
    display: flex;
    align-items: center;
    justify-content: space-between;
}
.flag {
    padding: 0;
    text-align: center;
}
td.indent {
    border-width: 0;
}
.group-row td {
    background: #f7f7f7;
    border-width: 0 0 1px;
    border-color: #d4d4d4;
}
.group-row .total {
    justify-content: flex-start;
    gap: 2px;
    margin-left: -16px;
}
.group-row .ico {
    margin: 0;
}
.group-row .indent {
    border-width: 0 0 1px;
}
.group-row .sum {
    overflow: visible;
}
.open {
    color: #2a2aff;
}
.paid {
    color: #8a8f98;
}
td a {
    text-decoration: underline;
}

/* Scrollbars */
.vscroll {
    position: absolute;
    top: 9px;
    right: 0;
    bottom: 0;
    width: 9px;
    display: flex;
    flex-direction: column;
    background: #f0f0f0;
    color: #14148c;
}
.hscroll {
    flex: none;
    display: flex;
    height: 8px;
    margin-right: 9px;
    background: #f0f0f0;
    color: #14148c;
}
.vscroll button, .hscroll button {
    display: flex;
    align-items: center;
    justify-content: center;
    width: 8px;
    height: 8px;
    border: 1px solid #d0d0d0;
    background: #fafafa;
}
.thumb {
    border: 1px solid #c4c4c4;
    background: #fafafa;
}
.vscroll .thumb {
    width: 8px;
    height: 32px;
}
.vscroll .end {
    margin-top: auto;
}
.hscroll .thumb {
    width: 59%;
}
.hscroll .end {
    margin-left: auto;
}

/* Status bar */
.status {
    flex: none;
    display: flex;
    align-items: center;
    gap: 3px;
    height: 11px;
    padding-left: 3px;
}
.online {
    width: 8px;
    height: 8px;
    border-radius: 50%;
    background: #6fa592;
}
```
FILE: script.js
```javascript
const EXA = 'Exanova GmbH, Zürich, (Nr. 53372)';
const OBF = 'OBF Holding AG - MutationVORFreigabe., Zürich, (Nr. 32...';
const AB1 = 'A&B1, Aarau, (Nr. 53341)';
const ACS = 'A&C Switzerland, Baar, (Nr. 3319)';
const AAA = 'aaabbb, , (Nr. 53337)';
const NET = '10 Tage netto';
const SKO = '10 Tage 2% Sko...';

// state, date, type, number, amount, payment date, subject, terms, address
const groups = [
    { name: 'ARP', sum: '0.00', rows: [
        ['open', '21.09.2011', 'Rechnung', '90238...', '0.00', '', '', NET, 'ETH-Zentrum, , (Nr. 54271)']
    ] },
    { name: 'CHF', sum: "716'371.32", rows: [
        ['', '05.08.2009', 'Rechnung', '72489...', "1'000.00", '', '', NET, 'Demo Firma AG, Zürich, (Nr. 3270)'],
        ['open', '07.08.2009', 'Rechnung', '98240', '102.20', '', '', NET, 'Office Services GmbH, Rotkreuz, (Nr. 3294)'],
        ['open', '19.08.2009', 'Rechnung', '453', "1'108.30", '', '', NET, OBF],
        ['', '04.11.2009', 'Rechnung', '12345...', "1'076.00", '', '', NET, AB1],
        ['', '04.11.2009', 'Rechnung', '12345...', "1'076.00", '', '', NET, AB1],
        ['', '05.11.2009', 'Rechnung', '111111', "1'076.00", '', '', NET, AB1],
        ['', '07.12.2009', 'Gutschrift', '1111112', "1'076.00", '', '', NET, AB1],
        ['', '24.02.2010', 'Rechnung', '20107...', '256.00', '', '', NET, AB1],
        ['', '24.02.2010', 'Rechnung', '20107...', "1'000.00", '', 'RE Test IBAN', NET, ACS],
        ['paid', '24.02.2010', 'Rechnung', '20107...', "2'000.00", '05.11.2013', '', NET, ACS],
        ['paid', '01.03.2010', 'Rechnung', '451', '100.00', '08.06.2011', '', NET, AAA],
        ['', '01.03.2010', 'Rechnung', '546', '100.00', '', '', NET, AAA],
        ['paid', '05.03.2010', 'Rechnung', '123', '210.00', '08.06.2011', '', NET, ACS],
        ['paid', '05.03.2010', 'Rechnung', '98987', "1'200.00", '05.11.2013', '', NET, ACS],
        ['', '15.03.2010', 'Gutschrift', '1', '0.00', '', '', NET, 'Hofmann GmbH, Pratteln, (Nr. 3295)'],
        ['open', '15.03.2010', 'Gutschrift', '1', '0.00', '', '', NET, 'aaaa10, , (Nr. 53360)'],
        ['', '02.05.2012', 'Rechnung', '20108...', "1'000.00", '', '', SKO, EXA],
        ['', '18.03.2010', 'Rechnung', '20108...', "1'000.00", '', '', NET, EXA],
        ['paid', '18.03.2010', 'Rechnung', '20109...', "1'000.00", '22.09.2010', '', NET, EXA],
        ['', '18.03.2010', 'Rechnung', '20108...', "30'000.00", '', '', NET, EXA],
        ['', '05.04.2010', 'Rechnung', '20105...', "1'000.00", '', '', SKO, EXA],
        ['paid', '25.06.2010', 'Rechnung', '20105...', "4'000.00", '16.09.2010', '', SKO, EXA],
        ['paid', '22.09.2010', 'Zahlung', '1161', "1'000.00", '22.09.2010', '', NET, EXA],
        ['', '13.05.2010', 'Zahlung', '1170', "4'000.00", '', '', NET, EXA],
        ['paid', '16.09.2010', 'Zahlung', '1172', "4'000.00", '16.09.2010', '', SKO, EXA],
        ['paid', '20.09.2010', 'Zahlung', '1173', '490.00', '20.09.2010', '', SKO, EXA],
        ['paid', '22.09.2010', 'Aufwandminder...', '1174', '10.00', '20.09.2010', '', SKO, EXA],
        ['open', '27.01.2011', 'Rechnung', '1234565', '0.00', '', '', NET, AAA],
        ['paid', '08.02.2011', 'Rechnung', '12345...', '100.00', '10.03.2011', 'Test', NET, 'my first address, , (Nr. 53344)'],
        ['open', '13.04.2011', 'Zahlung', '1184', "3'245.80", '', 'Inserat', SKO, EXA],
        ['open', '04.04.2011', 'Rechnung', '66720...', '0.00', '', 'Kopien Schlussb...', '30 Tage netto', OBF],
        ['open', '05.04.2011', 'Rechnung', '66720...', '0.00', '', 'Verpackung Kopi...', '30 Tage netto', OBF],
        ['', '06.04.2011', 'Rechnung', '66720...', '683.40', '', 'Binden Schlussb...', '30 Tage netto', OBF],
        ['open', '07.04.2011', 'Rechnung', '66720...', '0.00', '', 'Nachdruck Schlu...', 'Vorauszahlung', OBF],
        ['open', '15.04.2011', 'Rechnung', '66720...', '0.00', '', 'Honorar Präsent...', SKO, OBF]
    ] }
];

const icons = { Rechnung: 'i-rechnung', Gutschrift: 'i-gut', Zahlung: 'i-zahl' };

function esc(text) {
    return text.replace(/&/g, '&amp;');
}

function icon(id, size) {
    return `<svg class="ico ${size}"><use href="#${id}"/></svg>`;
}

function groupRow(group) {
    return `<tr class="group-row">
        <td class="indent">${icon('i-minus', 's5')}</td>
        <td colspan="5">${group.name}</td>
        <td class="sum" colspan="9"><span class="total">${icon('i-sum', 's8')}(Betrag) = ${group.sum}</span></td>
    </tr>`;
}

function dataRow([state, date, type, nr, amount, payDate, subject, terms, address]) {
    return `<tr class="${state}">
        <td class="indent"></td>
        <td>${icon(icons[type] || 'i-aufwand', 's8')}</td>
        <td class="flag">-</td><td></td><td></td>
        <td>${date}</td><td>${type}</td><td>${nr}</td>
        <td class="num">${amount}</td><td>${payDate}</td><td class="num">0.00</td>
        <td>${subject}</td><td>${terms}</td>
        <td><a href="#">${esc(address)}</a></td><td></td>
    </tr>`;
}

document.getElementById('rows').innerHTML =
    groups.map(g => groupRow(g) + g.rows.map(dataRow).join('')).join('');
```
